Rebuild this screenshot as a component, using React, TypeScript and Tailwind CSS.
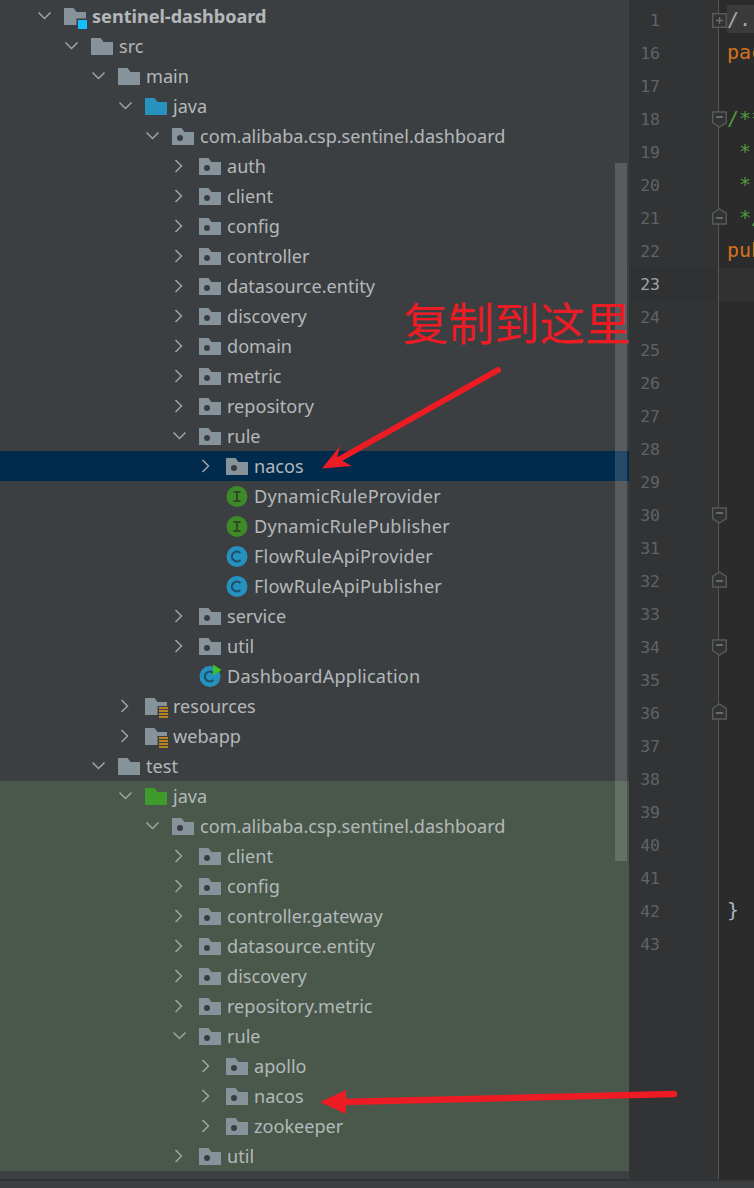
import type { ReactNode } from "react";

type IconKind = "module" | "folder" | "source" | "test" | "package" | "res" | "iface" | "class" | "app";

type TreeRow = {
  name: string;
  level: number;
  icon: IconKind;
  open?: boolean;
  leaf?: boolean;
  green?: boolean;
  selected?: boolean;
};

const LEVEL_PADDING = ["pl-[38px]", "pl-[65px]", "pl-[92px]", "pl-[119px]", "pl-[146px]", "pl-[173px]", "pl-[200px]"];

const rows: TreeRow[] = [
  { name: "sentinel-dashboard", level: 0, icon: "module", open: true },
  { name: "src", level: 1, icon: "folder", open: true },
  { name: "main", level: 2, icon: "folder", open: true },
  { name: "java", level: 3, icon: "source", open: true },
  { name: "com.alibaba.csp.sentinel.dashboard", level: 4, icon: "package", open: true },
  { name: "auth", level: 5, icon: "package" },
  { name: "client", level: 5, icon: "package" },
  { name: "config", level: 5, icon: "package" },
  { name: "controller", level: 5, icon: "package" },
  { name: "datasource.entity", level: 5, icon: "package" },
  { name: "discovery", level: 5, icon: "package" },
  { name: "domain", level: 5, icon: "package" },
  { name: "metric", level: 5, icon: "package" },
  { name: "repository", level: 5, icon: "package" },
  { name: "rule", level: 5, icon: "package", open: true },
  { name: "nacos", level: 6, icon: "package", selected: true },
  { name: "DynamicRuleProvider", level: 6, icon: "iface", leaf: true },
  { name: "DynamicRulePublisher", level: 6, icon: "iface", leaf: true },
  { name: "FlowRuleApiProvider", level: 6, icon: "class", leaf: true },
  { name: "FlowRuleApiPublisher", level: 6, icon: "class", leaf: true },
  { name: "service", level: 5, icon: "package" },
  { name: "util", level: 5, icon: "package" },
  { name: "DashboardApplication", level: 5, icon: "app", leaf: true },
  { name: "resources", level: 3, icon: "res" },
  { name: "webapp", level: 3, icon: "res" },
  { name: "test", level: 2, icon: "folder", open: true },
  { name: "java", level: 3, icon: "test", open: true, green: true },
  { name: "com.alibaba.csp.sentinel.dashboard", level: 4, icon: "package", open: true, green: true },
  { name: "client", level: 5, icon: "package", green: true },
  { name: "config", level: 5, icon: "package", green: true },
  { name: "controller.gateway", level: 5, icon: "package", green: true },
  { name: "datasource.entity", level: 5, icon: "package", green: true },
  { name: "discovery", level: 5, icon: "package", green: true },
  { name: "repository.metric", level: 5, icon: "package", green: true },
  { name: "rule", level: 5, icon: "package", open: true, green: true },
  { name: "apollo", level: 6, icon: "package", green: true },
  { name: "nacos", level: 6, icon: "package", green: true },
  { name: "zookeeper", level: 6, icon: "package", green: true },
  { name: "util", level: 5, icon: "package", green: true },
];

const FOLDER_PATH = "M0 0H9.5L12.5 4H22V17H0Z";

const Folder = ({ fill = "#87939a", children }: { fill?: string; children?: ReactNode }) => (
  <svg width="24" height="22" viewBox="0 0 24 22" className="shrink-0 overflow-visible">
    <g transform="translate(0 3)">
      <path d={FOLDER_PATH} fill={fill} />
      {children}
    </g>
  </svg>
);

const ClassIcon = ({ color, letter, run }: { color: string; letter: "I" | "C"; run?: boolean }) => (
  <svg width="24" height="22" viewBox="0 0 24 22" className="shrink-0 overflow-visible">
    <circle cx="11" cy="11.5" r="10.5" fill={color} />
    {letter === "I" ? (
      <path d="M7.5 7H14.5M11 7V16M7.5 16H14.5" stroke="#2d4a24" strokeWidth="2" fill="none" />
    ) : (
      <path d="M14.500 8.100A5 5 0 1 0 14.500 14.900" stroke="#1f4f66" strokeWidth="2" fill="none" />
    )}
    {run && <path d="M14 -0.500L22.500 5L14 10.500Z" fill="#3fbf20" />}
  </svg>
);

const RowIcon = ({ kind }: { kind: IconKind }) => {
  switch (kind) {
    case "module":
      return (
        <Folder>
          <rect x="12.5" y="10.5" width="11" height="11" fill="#3c3f41" />
          <rect x="14" y="12" width="9" height="9" fill="#13bfff" />
        </Folder>
      );
    case "source":
      return <Folder fill="#2692bd" />;
    case "test":
      return <Folder fill="#3f9a2c" />;
    case "package":
      return (
        <Folder>
          <circle cx="8" cy="10" r="3" fill="#3a3d40" />
        </Folder>
      );
    case "res":
      return (
        <Folder>
          <rect x="12.5" y="8" width="11" height="14" fill="#3c3f41" />
          <path d="M14 10H23M14 13H23M14 16H23M14 19H23" stroke="#e59b16" strokeWidth="1.6" />
        </Folder>
      );
    case "iface":
      return <ClassIcon color="#3e8a28" letter="I" />;
    case "class":
      return <ClassIcon color="#2591bf" letter="C" />;
    case "app":
      return <ClassIcon color="#2591bf" letter="C" run />;
    default:
      return <Folder />;
  }
};

const Chevron = ({ open }: { open?: boolean }) => (
  <svg width="26" height="14" viewBox="0 0 26 14" className="shrink-0" fill="none" stroke="#a0a3a5" strokeWidth="1.5">
    {open ? <path d="M0.5 3.5L6.5 9.5L12.5 3.5" /> : <path d="M2.500 1L8.500 7L2.500 13" />}
  </svg>
);

const Row = ({ row }: { row: TreeRow }) => {
  const bg = row.selected ? "bg-[#002b4d]" : row.green ? "bg-[#49584a]" : "";
  return (
    <div className={`flex h-[30px] items-center ${LEVEL_PADDING[row.level]} ${bg}`}>
      {row.leaf ? <div className="w-[26px] shrink-0" /> : <Chevron open={row.open} />}
      <RowIcon kind={row.icon} />
      <span
        className={`ml-[4px] whitespace-nowrap text-[18.1px] leading-[30px] text-[#b4b8ba] ${
          row.icon === "module" ? "font-bold" : ""
        } ${row.leaf ? "tracking-[0.22px]" : ""}`}
      >
        {row.name}
      </span>
    </div>
  );
};

type Fold = "plus" | "down" | "up";
type CodeLine = { no: number; fold?: Fold; code?: ReactNode; current?: boolean };

const Orange = ({ children }: { children: ReactNode }) => <span className="text-[#d4721a]">{children}</span>;
const Green = ({ children }: { children: ReactNode }) => <span className="text-[#4f9a3d]">{children}</span>;

const lines: CodeLine[] = [
  { no: 1, fold: "plus", code: <span className="block h-[28px] bg-[#3a3a3a] leading-[28px] text-[#a4a9ad]">/...</span> },
  { no: 16, code: <Orange>package</Orange> },
  { no: 17 },
  { no: 18, fold: "down", code: <Green>/**</Green> },
  { no: 19, code: <Green> *</Green> },
  { no: 20, code: <Green> *</Green> },
  { no: 21, fold: "up", code: <Green> */</Green> },
  { no: 22, code: <Orange>public</Orange> },
  { no: 23, current: true },
  ...[24, 25, 26, 27, 28, 29].map((no) => ({ no })),
  { no: 30, fold: "down" },
  { no: 31 },
  { no: 32, fold: "up" },
  { no: 33 },
  { no: 34, fold: "down" },
  { no: 35 },
  { no: 36, fold: "up" },
  ...[37, 38, 39, 40, 41].map((no) => ({ no })),
  { no: 42, code: <span className="text-[#a9b7c6]">{"}"}</span> },
  { no: 43 },
];

const FoldMark = ({ fold }: { fold: Fold }) => (
  <svg
    width="15"
    height="17"
    viewBox="0 0 15 17"
    fill="#313335"
    stroke="#5a5a5a"
    strokeWidth="1.4"
    className={`absolute right-[-9px] ${fold === "up" ? "top-[5.5px]" : "top-[8px]"}`}
  >
    {fold === "plus" && (
      <>
        <rect x="0.7" y="1.7" width="13.6" height="13.6" />
        <path d="M4 8.5H11M7.5 5V12" stroke="#6e6e6e" />
      </>
    )}
    {fold === "down" && (
      <>
        <path d="M0.7 1V11.5L7.5 16L14.3 11.5V1Z" />
        <path d="M4 6H11" stroke="#808080" />
      </>
    )}
    {fold === "up" && (
      <>
        <path d="M0.7 16V5.5L7.5 1L14.3 5.5V16Z" />
        <path d="M4 10H11" stroke="#808080" />
      </>
    )}
  </svg>
);

const EditorLine = ({ line }: { line: CodeLine }) => (
  <div className={`flex h-[33px] ${line.current ? "bg-[#323232]" : ""}`}>
    <div
      className={`relative flex w-[90px] shrink-0 justify-start pl-[11px] border-r border-[#555555] ${
        line.current ? "bg-[#2f3133]" : ""
      }`}
    >
      <span
        className={`w-[20px] text-right text-[16.5px] leading-[33px] ${
          line.current ? "text-[#a4a3a3]" : "text-[#606366]"
        }`}
      >
        {line.no}
      </span>
      {line.fold && <FoldMark fold={line.fold} />}
    </div>
    <div className="min-w-0 flex-1 overflow-hidden pl-[8px] pt-px whitespace-pre text-[20px] leading-[29px]">
      {line.code}
    </div>
  </div>
);

const App = () => (
  <div className="relative flex h-[1188px] w-[754px] flex-col overflow-hidden bg-[#3c3f41] font-['Noto_Sans','Liberation_Sans',sans-serif]">
    <div className="flex h-[1179px] shrink-0">
      <div className="relative w-[629px] shrink-0 overflow-hidden pt-px">
        {rows.map((row, i) => (
          <Row key={i} row={row} />
        ))}
        <div className="absolute left-[615px] top-[163px] h-[698px] w-[12px] bg-white/15" />
      </div>
      <div className="relative min-w-0 flex-1 bg-[#2b2b2b] font-['DejaVu_Sans_Mono','Liberation_Mono',monospace]">
        <div className="absolute inset-y-0 left-0 w-[90px] border-r border-[#555555] bg-[#313335]" />
        <div className="relative pt-[4px]">
          {lines.map((line) => (
            <EditorLine key={line.no} line={line} />
          ))}
        </div>
      </div>
    </div>
    <div className="h-[9px] border-t-2 border-[#323232] bg-[#3c3f41]" />

    {/* annotation drawn on top of the screenshot */}
    <span className="absolute left-[403px] top-[288px] whitespace-nowrap font-['Noto_Sans_CJK_SC',sans-serif] text-[45.5px] font-normal leading-[66px] text-[#ed1c24]">
      复制到这里
    </span>
    <svg width="754" height="1188" viewBox="0 0 754 1188" className="pointer-events-none absolute left-0 top-0">
      <path d="M498 370L338 460" stroke="#ed1c24" strokeWidth="6" strokeLinecap="round" fill="none" />
      <path d="M322 468.500L340 446L337 458L352 466Z" fill="#ed1c24" />
      <path d="M674 1094L340 1102" stroke="#ed1c24" strokeWidth="6.500" strokeLinecap="round" fill="none" />
      <path d="M320 1102L346 1090L346 1114Z" fill="#ed1c24" />
    </svg>
  </div>
);

export default App;
